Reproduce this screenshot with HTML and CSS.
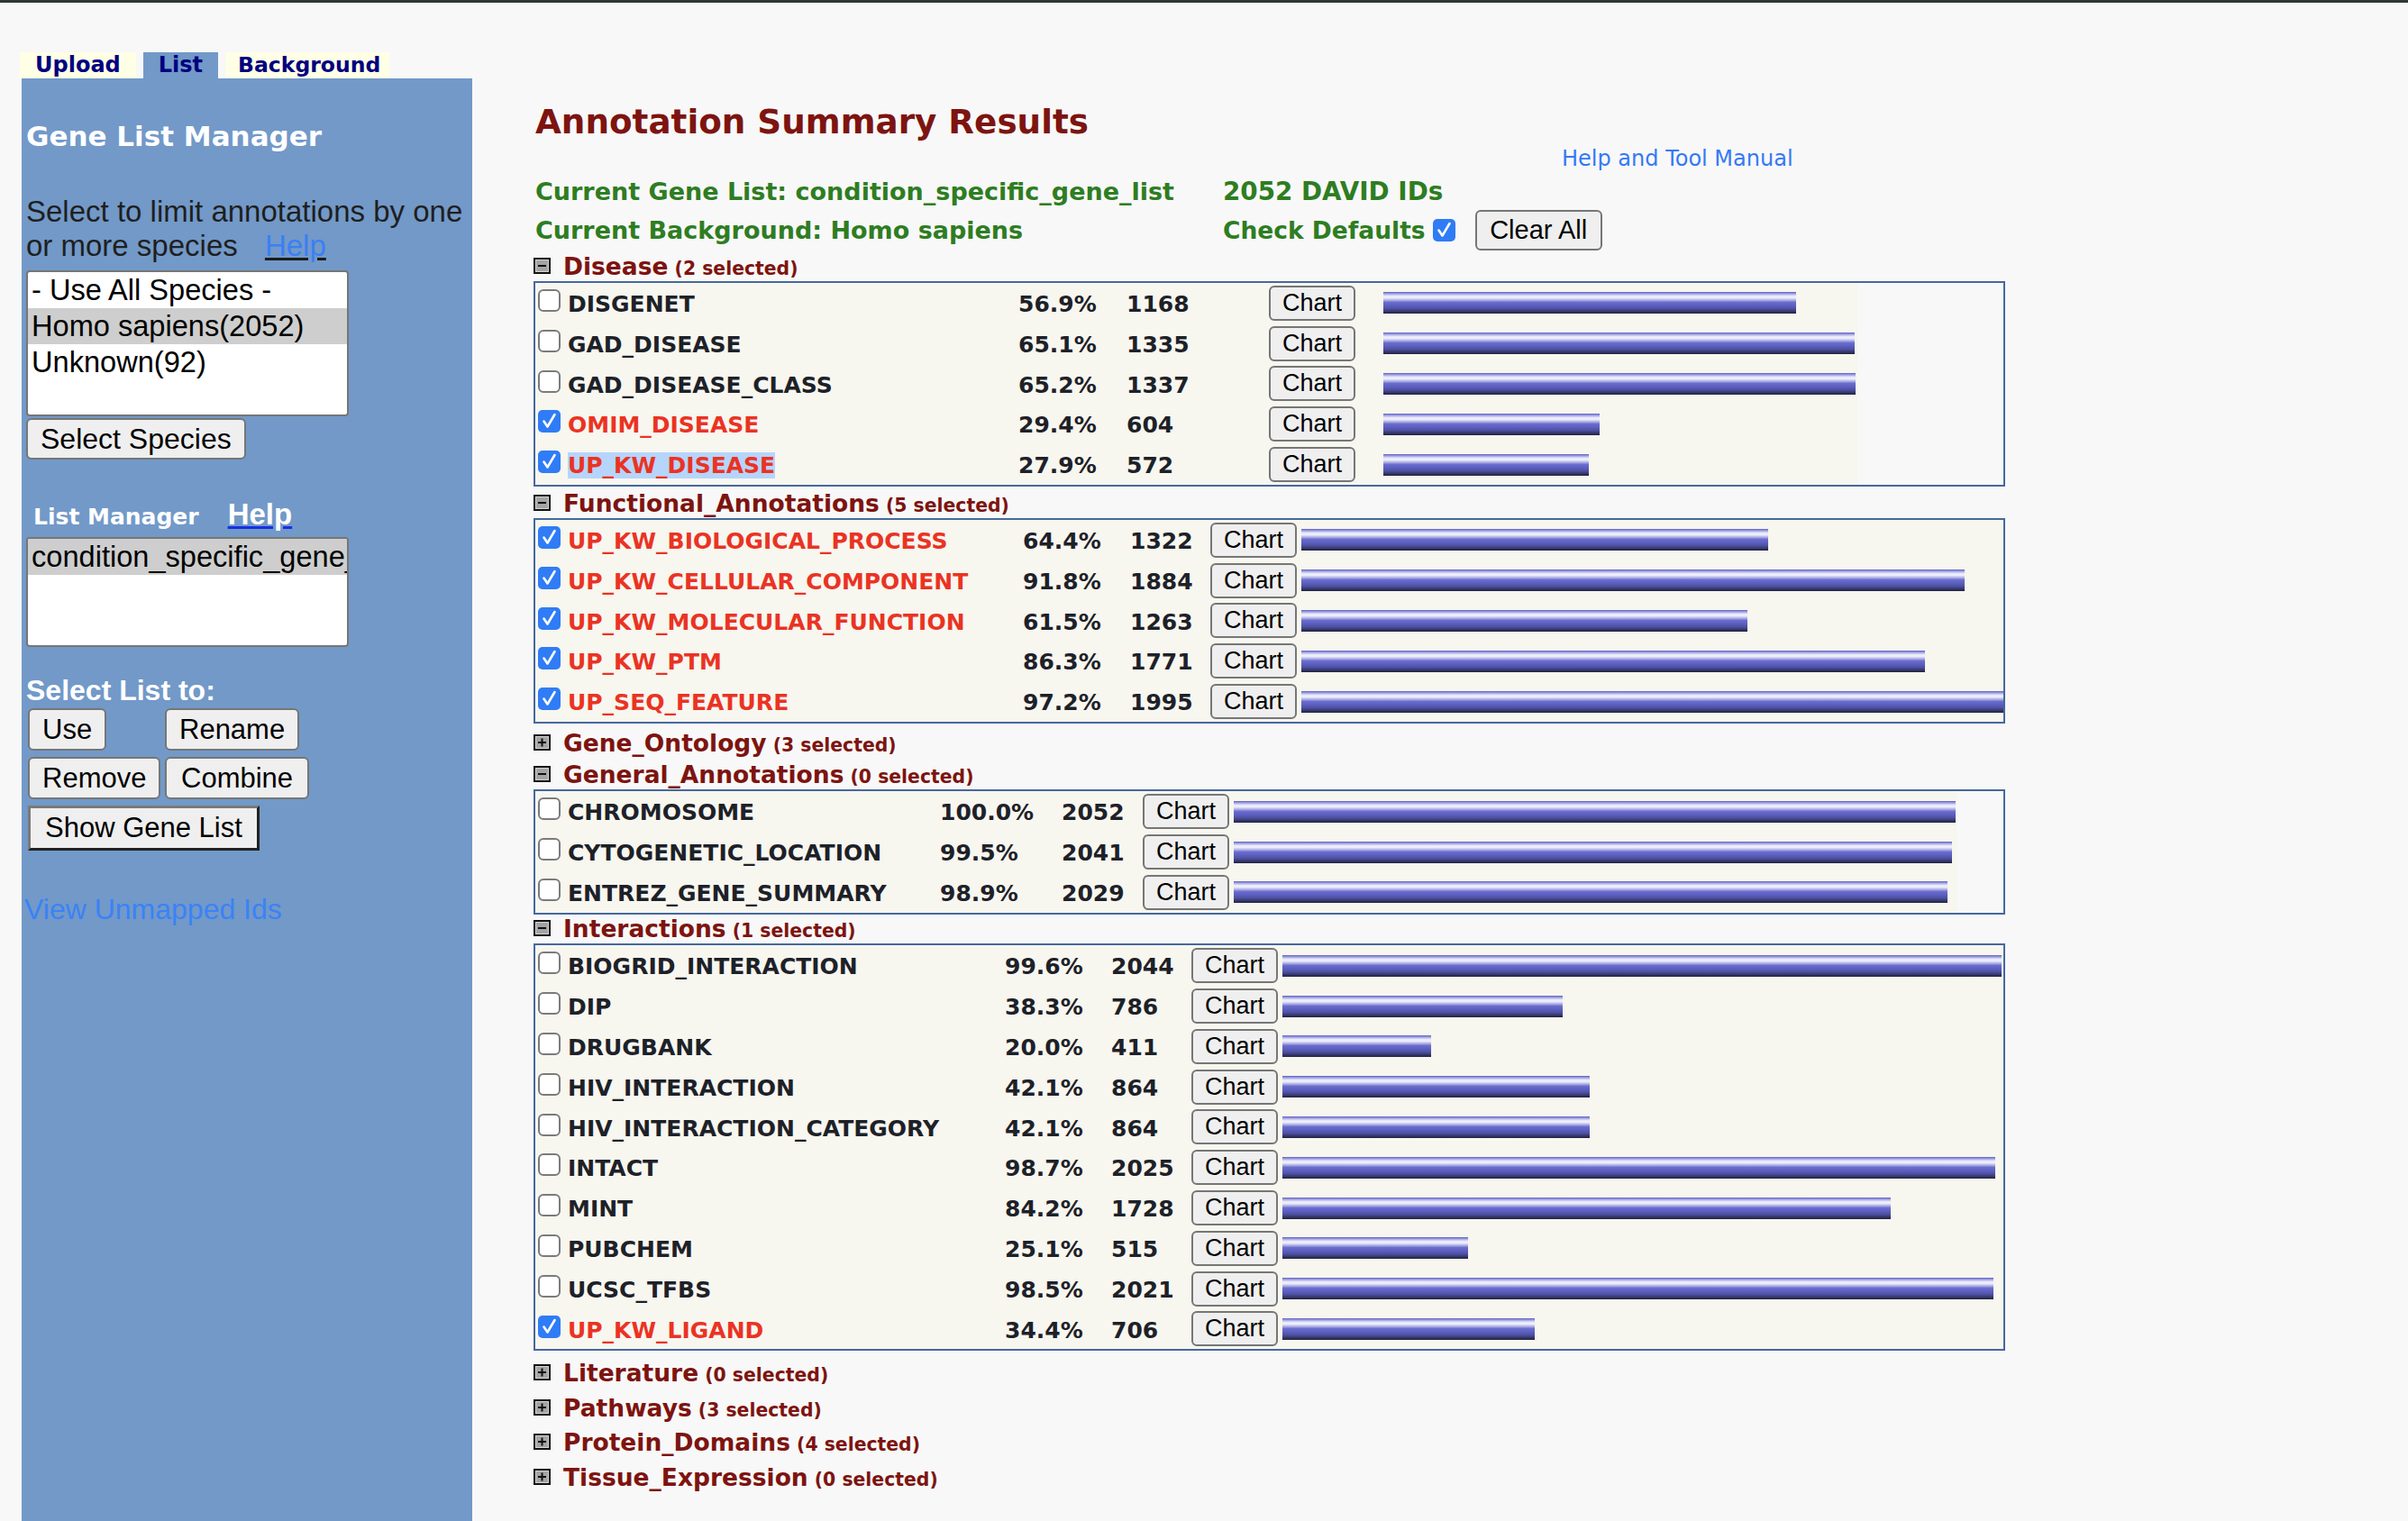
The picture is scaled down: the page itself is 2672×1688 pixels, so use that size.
FILE: index.html
```html
<!DOCTYPE html>
<html lang="en">
<head>
<meta charset="utf-8">
<title>Annotation Summary Results</title>
<link rel="stylesheet" href="styles.css">
</head>
<body>
<div class="page">
  <aside class="side">
    <nav class="tabs">
      <span class="tab">Upload</span>
      <span class="tab tab-on">List</span>
      <span class="tab tab-bg">Background</span>
    </nav>
    <div class="panel">
      <h2 class="glm">Gene List Manager</h2>
      <p class="species-note">Select to limit annotations by one or more species <a class="help-inline">Help</a></p>
      <div class="listbox lb-species">
        <div class="opt">- Use All Species -</div>
        <div class="opt sel">Homo sapiens(2052)</div>
        <div class="opt">Unknown(92)</div>
      </div>
      <button class="btn btn-species">Select Species</button>
      <div class="lm-row"><span class="lm-title">List Manager</span><a class="lm-help">Help</a></div>
      <div class="listbox lb-lists">
        <div class="opt sel">condition_specific_gene_list</div>
      </div>
      <div class="sl-title">Select List to:</div>
      <div class="list-actions">
        <button class="btn act">Use</button>
        <button class="btn act">Rename</button>
        <button class="btn act">Remove</button>
        <button class="btn act btn-combine">Combine</button>
        <button class="btn act btn-show">Show Gene List</button>
      </div>
      <a class="unmapped">View Unmapped Ids</a>
    </div>
  </aside>

  <main class="main">
    <h1 class="title">Annotation Summary Results</h1>
    <div class="help-line"><a class="manual">Help and Tool Manual</a></div>
    <div class="info">
      <div class="info-cell">Current Gene List: condition_specific_gene_list</div>
      <div class="info-cell col2 ids">2052 DAVID IDs</div>
      <div class="info-cell">Current Background: Homo sapiens</div>
      <div class="info-cell col2 defaults">Check Defaults
        <svg class="cb cb-def" width="25" height="25" viewBox="0 0 25 25"><rect x="0" y="0" width="25" height="25" rx="5" fill="#2f7cf6"/><path d="M6.5 12.5 L10.5 18.5 L18.5 5" fill="none" stroke="#fff" stroke-width="2.6" stroke-linecap="round" stroke-linejoin="round"/></svg>
        <button class="btn btn-clear">Clear All</button>
      </div>
    </div>

    <!-- Disease -->
    <section class="section">
      <div class="sec-head"><svg class="ico" width="19" height="18" viewBox="0 0 19 18"><rect x="1" y="1" width="17" height="16" fill="#a4a4a4" stroke="#111" stroke-width="2"/><rect x="2.5" y="2.5" width="14" height="13" fill="none" stroke="#d2d2d2" stroke-width="1"/><rect x="5" y="8" width="9" height="2" fill="#111"/></svg>Disease<span class="sel-count"> (2 selected)</span></div>
      <div class="box">
        <div class="tbl tbl-disease">
          <div class="row"><div class="c-name"><svg class="cb" width="25" height="25" viewBox="0 0 25 25"><rect x="1" y="1" width="23" height="23" rx="5" fill="#fff" stroke="#7b7b7b" stroke-width="2"/></svg><span class="nm">DISGENET</span></div><div class="c-txt">56.9%</div><div class="c-txt">1168</div><div class="c-btn"><button class="btn chart">Chart</button></div><div class="c-bar"><span class="bar" style="width:458px"></span></div></div>
          <div class="row"><div class="c-name"><svg class="cb" width="25" height="25" viewBox="0 0 25 25"><rect x="1" y="1" width="23" height="23" rx="5" fill="#fff" stroke="#7b7b7b" stroke-width="2"/></svg><span class="nm">GAD_DISEASE</span></div><div class="c-txt">65.1%</div><div class="c-txt">1335</div><div class="c-btn"><button class="btn chart">Chart</button></div><div class="c-bar"><span class="bar" style="width:523px"></span></div></div>
          <div class="row"><div class="c-name"><svg class="cb" width="25" height="25" viewBox="0 0 25 25"><rect x="1" y="1" width="23" height="23" rx="5" fill="#fff" stroke="#7b7b7b" stroke-width="2"/></svg><span class="nm">GAD_DISEASE_CLASS</span></div><div class="c-txt">65.2%</div><div class="c-txt">1337</div><div class="c-btn"><button class="btn chart">Chart</button></div><div class="c-bar"><span class="bar" style="width:524px"></span></div></div>
          <div class="row"><div class="c-name"><svg class="cb" width="25" height="25" viewBox="0 0 25 25"><rect x="0" y="0" width="25" height="25" rx="5" fill="#2f7cf6"/><path d="M6.5 12.5 L10.5 18.5 L18.5 5" fill="none" stroke="#fff" stroke-width="2.6" stroke-linecap="round" stroke-linejoin="round"/></svg><span class="nm on">OMIM_DISEASE</span></div><div class="c-txt">29.4%</div><div class="c-txt">604</div><div class="c-btn"><button class="btn chart">Chart</button></div><div class="c-bar"><span class="bar" style="width:240px"></span></div></div>
          <div class="row"><div class="c-name"><svg class="cb" width="25" height="25" viewBox="0 0 25 25"><rect x="0" y="0" width="25" height="25" rx="5" fill="#2f7cf6"/><path d="M6.5 12.5 L10.5 18.5 L18.5 5" fill="none" stroke="#fff" stroke-width="2.6" stroke-linecap="round" stroke-linejoin="round"/></svg><span class="nm on hl">UP_KW_DISEASE</span></div><div class="c-txt">27.9%</div><div class="c-txt">572</div><div class="c-btn"><button class="btn chart">Chart</button></div><div class="c-bar"><span class="bar" style="width:228px"></span></div></div>
        </div>
      </div>
    </section>

    <!-- Functional -->
    <section class="section">
      <div class="sec-head"><svg class="ico" width="19" height="18" viewBox="0 0 19 18"><rect x="1" y="1" width="17" height="16" fill="#a4a4a4" stroke="#111" stroke-width="2"/><rect x="2.5" y="2.5" width="14" height="13" fill="none" stroke="#d2d2d2" stroke-width="1"/><rect x="5" y="8" width="9" height="2" fill="#111"/></svg>Functional_Annotations<span class="sel-count"> (5 selected)</span></div>
      <div class="box">
        <div class="tbl tbl-func">
          <div class="row"><div class="c-name"><svg class="cb" width="25" height="25" viewBox="0 0 25 25"><rect x="0" y="0" width="25" height="25" rx="5" fill="#2f7cf6"/><path d="M6.5 12.5 L10.5 18.5 L18.5 5" fill="none" stroke="#fff" stroke-width="2.6" stroke-linecap="round" stroke-linejoin="round"/></svg><span class="nm on">UP_KW_BIOLOGICAL_PROCESS</span></div><div class="c-txt">64.4%</div><div class="c-txt">1322</div><div class="c-btn"><button class="btn chart">Chart</button></div><div class="c-bar"><span class="bar" style="width:518px"></span></div></div>
          <div class="row"><div class="c-name"><svg class="cb" width="25" height="25" viewBox="0 0 25 25"><rect x="0" y="0" width="25" height="25" rx="5" fill="#2f7cf6"/><path d="M6.5 12.5 L10.5 18.5 L18.5 5" fill="none" stroke="#fff" stroke-width="2.6" stroke-linecap="round" stroke-linejoin="round"/></svg><span class="nm on">UP_KW_CELLULAR_COMPONENT</span></div><div class="c-txt">91.8%</div><div class="c-txt">1884</div><div class="c-btn"><button class="btn chart">Chart</button></div><div class="c-bar"><span class="bar" style="width:736px"></span></div></div>
          <div class="row"><div class="c-name"><svg class="cb" width="25" height="25" viewBox="0 0 25 25"><rect x="0" y="0" width="25" height="25" rx="5" fill="#2f7cf6"/><path d="M6.5 12.5 L10.5 18.5 L18.5 5" fill="none" stroke="#fff" stroke-width="2.6" stroke-linecap="round" stroke-linejoin="round"/></svg><span class="nm on">UP_KW_MOLECULAR_FUNCTION</span></div><div class="c-txt">61.5%</div><div class="c-txt">1263</div><div class="c-btn"><button class="btn chart">Chart</button></div><div class="c-bar"><span class="bar" style="width:495px"></span></div></div>
          <div class="row"><div class="c-name"><svg class="cb" width="25" height="25" viewBox="0 0 25 25"><rect x="0" y="0" width="25" height="25" rx="5" fill="#2f7cf6"/><path d="M6.5 12.5 L10.5 18.5 L18.5 5" fill="none" stroke="#fff" stroke-width="2.6" stroke-linecap="round" stroke-linejoin="round"/></svg><span class="nm on">UP_KW_PTM</span></div><div class="c-txt">86.3%</div><div class="c-txt">1771</div><div class="c-btn"><button class="btn chart">Chart</button></div><div class="c-bar"><span class="bar" style="width:692px"></span></div></div>
          <div class="row"><div class="c-name"><svg class="cb" width="25" height="25" viewBox="0 0 25 25"><rect x="0" y="0" width="25" height="25" rx="5" fill="#2f7cf6"/><path d="M6.5 12.5 L10.5 18.5 L18.5 5" fill="none" stroke="#fff" stroke-width="2.6" stroke-linecap="round" stroke-linejoin="round"/></svg><span class="nm on">UP_SEQ_FEATURE</span></div><div class="c-txt">97.2%</div><div class="c-txt">1995</div><div class="c-btn"><button class="btn chart">Chart</button></div><div class="c-bar"><span class="bar" style="width:779px"></span></div></div>
        </div>
      </div>
    </section>

    <!-- Gene Ontology -->
    <section class="section collapsed">
      <div class="sec-head"><svg class="ico" width="19" height="18" viewBox="0 0 19 18"><rect x="1" y="1" width="17" height="16" fill="#a4a4a4" stroke="#111" stroke-width="2"/><rect x="2.5" y="2.5" width="14" height="13" fill="none" stroke="#d2d2d2" stroke-width="1"/><rect x="5" y="8" width="9" height="2" fill="#111"/><rect x="8.5" y="4.5" width="2" height="9" fill="#111"/></svg>Gene_Ontology<span class="sel-count"> (3 selected)</span></div>
    </section>

    <!-- General -->
    <section class="section">
      <div class="sec-head"><svg class="ico" width="19" height="18" viewBox="0 0 19 18"><rect x="1" y="1" width="17" height="16" fill="#a4a4a4" stroke="#111" stroke-width="2"/><rect x="2.5" y="2.5" width="14" height="13" fill="none" stroke="#d2d2d2" stroke-width="1"/><rect x="5" y="8" width="9" height="2" fill="#111"/></svg>General_Annotations<span class="sel-count"> (0 selected)</span></div>
      <div class="box">
        <div class="tbl tbl-general">
          <div class="row"><div class="c-name"><svg class="cb" width="25" height="25" viewBox="0 0 25 25"><rect x="1" y="1" width="23" height="23" rx="5" fill="#fff" stroke="#7b7b7b" stroke-width="2"/></svg><span class="nm">CHROMOSOME</span></div><div class="c-txt">100.0%</div><div class="c-txt">2052</div><div class="c-btn"><button class="btn chart">Chart</button></div><div class="c-bar"><span class="bar" style="width:801px"></span></div></div>
          <div class="row"><div class="c-name"><svg class="cb" width="25" height="25" viewBox="0 0 25 25"><rect x="1" y="1" width="23" height="23" rx="5" fill="#fff" stroke="#7b7b7b" stroke-width="2"/></svg><span class="nm">CYTOGENETIC_LOCATION</span></div><div class="c-txt">99.5%</div><div class="c-txt">2041</div><div class="c-btn"><button class="btn chart">Chart</button></div><div class="c-bar"><span class="bar" style="width:797px"></span></div></div>
          <div class="row"><div class="c-name"><svg class="cb" width="25" height="25" viewBox="0 0 25 25"><rect x="1" y="1" width="23" height="23" rx="5" fill="#fff" stroke="#7b7b7b" stroke-width="2"/></svg><span class="nm">ENTREZ_GENE_SUMMARY</span></div><div class="c-txt">98.9%</div><div class="c-txt">2029</div><div class="c-btn"><button class="btn chart">Chart</button></div><div class="c-bar"><span class="bar" style="width:792px"></span></div></div>
        </div>
      </div>
    </section>

    <!-- Interactions -->
    <section class="section inter">
      <div class="sec-head"><svg class="ico" width="19" height="18" viewBox="0 0 19 18"><rect x="1" y="1" width="17" height="16" fill="#a4a4a4" stroke="#111" stroke-width="2"/><rect x="2.5" y="2.5" width="14" height="13" fill="none" stroke="#d2d2d2" stroke-width="1"/><rect x="5" y="8" width="9" height="2" fill="#111"/></svg>Interactions<span class="sel-count"> (1 selected)</span></div>
      <div class="box">
        <div class="tbl tbl-inter">
          <div class="row"><div class="c-name"><svg class="cb" width="25" height="25" viewBox="0 0 25 25"><rect x="1" y="1" width="23" height="23" rx="5" fill="#fff" stroke="#7b7b7b" stroke-width="2"/></svg><span class="nm">BIOGRID_INTERACTION</span></div><div class="c-txt">99.6%</div><div class="c-txt">2044</div><div class="c-btn"><button class="btn chart">Chart</button></div><div class="c-bar"><span class="bar" style="width:798px"></span></div></div>
          <div class="row"><div class="c-name"><svg class="cb" width="25" height="25" viewBox="0 0 25 25"><rect x="1" y="1" width="23" height="23" rx="5" fill="#fff" stroke="#7b7b7b" stroke-width="2"/></svg><span class="nm">DIP</span></div><div class="c-txt">38.3%</div><div class="c-txt">786</div><div class="c-btn"><button class="btn chart">Chart</button></div><div class="c-bar"><span class="bar" style="width:311px"></span></div></div>
          <div class="row"><div class="c-name"><svg class="cb" width="25" height="25" viewBox="0 0 25 25"><rect x="1" y="1" width="23" height="23" rx="5" fill="#fff" stroke="#7b7b7b" stroke-width="2"/></svg><span class="nm">DRUGBANK</span></div><div class="c-txt">20.0%</div><div class="c-txt">411</div><div class="c-btn"><button class="btn chart">Chart</button></div><div class="c-bar"><span class="bar" style="width:165px"></span></div></div>
          <div class="row"><div class="c-name"><svg class="cb" width="25" height="25" viewBox="0 0 25 25"><rect x="1" y="1" width="23" height="23" rx="5" fill="#fff" stroke="#7b7b7b" stroke-width="2"/></svg><span class="nm">HIV_INTERACTION</span></div><div class="c-txt">42.1%</div><div class="c-txt">864</div><div class="c-btn"><button class="btn chart">Chart</button></div><div class="c-bar"><span class="bar" style="width:341px"></span></div></div>
          <div class="row"><div class="c-name"><svg class="cb" width="25" height="25" viewBox="0 0 25 25"><rect x="1" y="1" width="23" height="23" rx="5" fill="#fff" stroke="#7b7b7b" stroke-width="2"/></svg><span class="nm">HIV_INTERACTION_CATEGORY</span></div><div class="c-txt">42.1%</div><div class="c-txt">864</div><div class="c-btn"><button class="btn chart">Chart</button></div><div class="c-bar"><span class="bar" style="width:341px"></span></div></div>
          <div class="row"><div class="c-name"><svg class="cb" width="25" height="25" viewBox="0 0 25 25"><rect x="1" y="1" width="23" height="23" rx="5" fill="#fff" stroke="#7b7b7b" stroke-width="2"/></svg><span class="nm">INTACT</span></div><div class="c-txt">98.7%</div><div class="c-txt">2025</div><div class="c-btn"><button class="btn chart">Chart</button></div><div class="c-bar"><span class="bar" style="width:791px"></span></div></div>
          <div class="row"><div class="c-name"><svg class="cb" width="25" height="25" viewBox="0 0 25 25"><rect x="1" y="1" width="23" height="23" rx="5" fill="#fff" stroke="#7b7b7b" stroke-width="2"/></svg><span class="nm">MINT</span></div><div class="c-txt">84.2%</div><div class="c-txt">1728</div><div class="c-btn"><button class="btn chart">Chart</button></div><div class="c-bar"><span class="bar" style="width:675px"></span></div></div>
          <div class="row"><div class="c-name"><svg class="cb" width="25" height="25" viewBox="0 0 25 25"><rect x="1" y="1" width="23" height="23" rx="5" fill="#fff" stroke="#7b7b7b" stroke-width="2"/></svg><span class="nm">PUBCHEM</span></div><div class="c-txt">25.1%</div><div class="c-txt">515</div><div class="c-btn"><button class="btn chart">Chart</button></div><div class="c-bar"><span class="bar" style="width:206px"></span></div></div>
          <div class="row"><div class="c-name"><svg class="cb" width="25" height="25" viewBox="0 0 25 25"><rect x="1" y="1" width="23" height="23" rx="5" fill="#fff" stroke="#7b7b7b" stroke-width="2"/></svg><span class="nm">UCSC_TFBS</span></div><div class="c-txt">98.5%</div><div class="c-txt">2021</div><div class="c-btn"><button class="btn chart">Chart</button></div><div class="c-bar"><span class="bar" style="width:789px"></span></div></div>
          <div class="row"><div class="c-name"><svg class="cb" width="25" height="25" viewBox="0 0 25 25"><rect x="0" y="0" width="25" height="25" rx="5" fill="#2f7cf6"/><path d="M6.5 12.5 L10.5 18.5 L18.5 5" fill="none" stroke="#fff" stroke-width="2.6" stroke-linecap="round" stroke-linejoin="round"/></svg><span class="nm on">UP_KW_LIGAND</span></div><div class="c-txt">34.4%</div><div class="c-txt">706</div><div class="c-btn"><button class="btn chart">Chart</button></div><div class="c-bar"><span class="bar" style="width:280px"></span></div></div>
        </div>
      </div>
    </section>

    <section class="section collapsed lit">
      <div class="sec-head"><svg class="ico" width="19" height="18" viewBox="0 0 19 18"><rect x="1" y="1" width="17" height="16" fill="#a4a4a4" stroke="#111" stroke-width="2"/><rect x="2.5" y="2.5" width="14" height="13" fill="none" stroke="#d2d2d2" stroke-width="1"/><rect x="5" y="8" width="9" height="2" fill="#111"/><rect x="8.5" y="4.5" width="2" height="9" fill="#111"/></svg>Literature<span class="sel-count"> (0 selected)</span></div>
    </section>
    <section class="section collapsed">
      <div class="sec-head"><svg class="ico" width="19" height="18" viewBox="0 0 19 18"><rect x="1" y="1" width="17" height="16" fill="#a4a4a4" stroke="#111" stroke-width="2"/><rect x="2.5" y="2.5" width="14" height="13" fill="none" stroke="#d2d2d2" stroke-width="1"/><rect x="5" y="8" width="9" height="2" fill="#111"/><rect x="8.5" y="4.5" width="2" height="9" fill="#111"/></svg>Pathways<span class="sel-count"> (3 selected)</span></div>
    </section>
    <section class="section collapsed">
      <div class="sec-head"><svg class="ico" width="19" height="18" viewBox="0 0 19 18"><rect x="1" y="1" width="17" height="16" fill="#a4a4a4" stroke="#111" stroke-width="2"/><rect x="2.5" y="2.5" width="14" height="13" fill="none" stroke="#d2d2d2" stroke-width="1"/><rect x="5" y="8" width="9" height="2" fill="#111"/><rect x="8.5" y="4.5" width="2" height="9" fill="#111"/></svg>Protein_Domains<span class="sel-count"> (4 selected)</span></div>
    </section>
    <section class="section collapsed">
      <div class="sec-head"><svg class="ico" width="19" height="18" viewBox="0 0 19 18"><rect x="1" y="1" width="17" height="16" fill="#a4a4a4" stroke="#111" stroke-width="2"/><rect x="2.5" y="2.5" width="14" height="13" fill="none" stroke="#d2d2d2" stroke-width="1"/><rect x="5" y="8" width="9" height="2" fill="#111"/><rect x="8.5" y="4.5" width="2" height="9" fill="#111"/></svg>Tissue_Expression<span class="sel-count"> (0 selected)</span></div>
    </section>
  </main>
</div>
</body>
</html>
```

FILE: styles.css
```css
html, body {
  margin: 0;
  padding: 0;
}
body {
  background: #f8f8f8;
  border-top: 3px solid #2f3934;
  font-family: "DejaVu Sans", Verdana, sans-serif;
  overflow: hidden;
}
.page {
  display: flex;
  align-items: stretch;
  min-height: calc(100vh - 3px);
  padding-left: 22px;
}

/* ---------- sidebar ---------- */
.side {
  width: 502px;
  flex-shrink: 0;
  display: flex;
  flex-direction: column;
}
.tabs {
  display: flex;
  gap: 8px;
  margin-top: 55px;
  height: 29px;
}
.tab {
  height: 29px;
  line-height: 29px;
  padding: 0 17px;
  background: #ffffe6;
  color: #000080;
  font-family: "DejaVu Sans", sans-serif;
  font-weight: bold;
  font-size: 24px;
}
.tab-on { background: #7299c8; }
.tab-bg { font-size: 23.5px; padding: 0 10px 0 14px; }
.panel {
  flex: 1;
  margin-left: 2px;
  background: #7299c8;
  padding: 0 0 0 5px;
}
.glm {
  margin: 46px 0 0;
  font-family: "DejaVu Sans", sans-serif;
  font-weight: bold;
  font-size: 31px;
  line-height: 36px;
  color: #fff;
}
.species-note {
  margin: 47px 0 0;
  font-family: "Liberation Sans", Arial, sans-serif;
  font-size: 33px;
  line-height: 38px;
  color: #1f1f1f;
}
.help-inline {
  margin-left: 21px;
  color: #3b7ff5;
  text-decoration: underline;
  text-decoration-color: #1b1b1b;
}
.listbox {
  box-sizing: border-box;
  width: 358px;
  background: #fff;
  border: 2px solid #767676;
  border-radius: 4px;
  overflow: hidden;
  font-family: "Liberation Sans", Arial, sans-serif;
  font-size: 32.6px;
  color: #000;
}
.lb-species { height: 162px; margin-top: 8px; }
.lb-lists { height: 122px; margin-top: 5.4px; }
.opt {
  height: 40px;
  line-height: 40px;
  padding-left: 4px;
  white-space: nowrap;
}
.opt.sel { background: #cecece; }

.btn {
  box-sizing: border-box;
  display: block;
  height: 44px;
  padding: 0 14px;
  margin: 0;
  font-family: "Liberation Sans", Arial, sans-serif;
  font-size: 30.5px;
  color: #000;
  background: #efefef;
  border: 2px solid #767676;
  border-radius: 6px;
}
.btn-species {
  margin-top: 2px;
  height: 46px;
  font-size: 32px;
}
.lm-row {
  display: flex;
  align-items: baseline;
  height: 40px;
  margin-top: 40.6px;
  padding-left: 8px;
}
.lm-title {
  font-family: "DejaVu Sans", sans-serif;
  font-weight: bold;
  font-size: 25px;
  color: #fff;
}
.lm-help {
  margin-left: 32px;
  font-family: "Liberation Sans", Arial, sans-serif;
  font-weight: bold;
  font-size: 33px;
  line-height: 40px;
  color: #fff;
  text-decoration: underline;
  text-decoration-color: #1530e6;
  text-decoration-thickness: 3px;
}
.sl-title {
  margin-top: 30.4px;
  font-family: "Liberation Sans", Arial, sans-serif;
  font-weight: bold;
  font-size: 32px;
  line-height: 37px;
  color: #fff;
}
.list-actions {
  display: grid;
  grid-template-columns: 152px auto;
  row-gap: 6.5px;
  justify-items: start;
  margin-top: 0.6px;
  padding-left: 2px;
}
.act {
  height: 47.5px;
  font-size: 31px;
}
.btn-combine { padding: 0 16px; }
.btn-show {
  grid-column: 1 / span 2;
  height: 50px;
  border-width: 3px;
  border-style: solid;
  border-color: #7a7a7a #222 #222 #7a7a7a;
  border-radius: 0;
  padding: 0 16px;
}
.unmapped {
  display: block;
  margin: 47.4px 0 0 -2px;
  font-family: "Liberation Sans", Arial, sans-serif;
  font-size: 32px;
  line-height: 37px;
  color: #3b82f6;
  text-decoration: none;
}

/* ---------- main ---------- */
.main {
  margin-left: 68px;
  padding-top: 110.7px;
  width: 1633px;
  flex-shrink: 0;
}
.title {
  margin: 0 0 0 2px;
  font-family: "DejaVu Sans", sans-serif;
  font-weight: bold;
  font-size: 37.3px;
  line-height: 43px;
  color: #7d1410;
}
.help-line {
  margin-top: 5.3px;
  height: 29px;
  padding-left: 1141px;
}
.manual {
  font-family: "DejaVu Sans", sans-serif;
  font-size: 24px;
  line-height: 29px;
  color: #3479f6;
  text-decoration: none;
}
.info {
  display: grid;
  grid-template-columns: 763px auto;
}
.info-cell {
  height: 43px;
  padding-left: 2px;
  font-family: "DejaVu Sans", sans-serif;
  font-weight: bold;
  font-size: 27px;
  line-height: 43px;
  color: #2e7d22;
  white-space: nowrap;
}
.info-cell.ids { font-size: 27.8px; }
.defaults {
  display: flex;
  align-items: center;
  font-size: 26.5px;
}
.cb-def { margin-left: 8px; }
.btn-clear {
  margin-left: 22px;
  height: 45px;
  width: 141px;
  padding: 0;
  font-size: 29px;
  font-weight: normal;
}

.section { margin-top: 3px; }
.section.inter { margin-top: 0.5px; }
.section.collapsed { margin-top: 6.5px; }
.section.lit { margin-top: 9px; }
.sec-head {
  height: 32px;
  font-family: "DejaVu Sans", sans-serif;
  font-weight: bold;
  font-size: 26.5px;
  line-height: 32px;
  color: #7d1410;
  white-space: nowrap;
}
.ico {
  vertical-align: 1px;
  margin-right: 14px;
}
.sel-count { font-size: 20.4px; }

.box {
  border: 2px solid #45699c;
}
.tbl { background: #f7f6ef; }
.tbl-disease { width: 1467px; }
.tbl-func { width: 1629px; }
.tbl-general { width: 1577px; }
.tbl-inter { width: 1629px; }

.row {
  display: grid;
  grid-template-rows: 44.8px;
  height: 44.8px;
  align-items: start;
}
.tbl-disease .row { grid-template-columns: 536px 120px 158px 127px 526px; }
.tbl-func .row { grid-template-columns: 541px 119px 89px 101px 779px; }
.tbl-general .row { grid-template-columns: 449px 135px 90px 101px 802px; }
.tbl-inter .row { grid-template-columns: 521px 118px 89px 101px 800px; }

.c-name, .c-txt {
  padding-top: 2px;
  line-height: 44.8px;
  font-family: "DejaVu Sans", sans-serif;
  font-weight: bold;
  font-size: 25px;
  color: #1d2128;
  white-space: nowrap;
}
.c-name .cb {
  margin-left: 3px;
  vertical-align: baseline;
}
.nm { margin-left: 8px; }
.nm.on { color: #ea3323; }
.nm.hl { background: #b6d5fb; }

.c-btn, .c-bar {
  align-self: center;
}
.chart {
  width: 96px;
  height: 39px;
  padding: 0;
  font-size: 27px;
}
.bar {
  display: block;
  height: 24px;
  background: linear-gradient(to bottom,
    #5d5dbf 0%,
    #8d8fdc 6%,
    #e6e6f9 18%,
    #f2f2fd 26%,
    #b9bbea 36%,
    #6a6dcc 48%,
    #5d60c3 62%,
    #4d509f 78%,
    #343769 90%,
    #20223f 100%);
}
```
